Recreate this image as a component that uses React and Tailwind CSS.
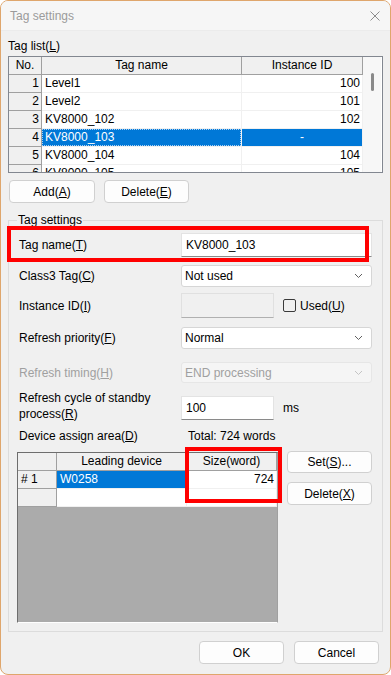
import React from 'react';

const tags = [
  { no: 1, name: 'Level1', id: '100' },
  { no: 2, name: 'Level2', id: '101' },
  { no: 3, name: 'KV8000_102', id: '102' },
  { no: 4, name: 'KV8000_103', id: '-', selected: true },
  { no: 5, name: 'KV8000_104', id: '104' },
  { no: 6, name: 'KV8000_105', id: '105' },
];

function Chevron({ color = '#606060' }) {
  return (
    <svg width="9" height="6" viewBox="0 0 9 6" className="shrink-0">
      <polyline points="1,1 4.5,4.5 8,1" fill="none" stroke={color} strokeWidth="1" />
    </svg>
  );
}

function Button({ children, className = '' }) {
  return (
    <div className={`flex items-center justify-center rounded-[4px] border border-[#d0d0d0] bg-[#fdfdfd] text-black ${className}`}>
      {children}
    </div>
  );
}

function Select({ value, disabled }) {
  return (
    <div
      className={`flex h-full w-[191px] items-center justify-between rounded-[3px] border pl-[3px] pr-[8px] ${
        disabled ? 'border-[#e6e6e6] bg-[#f5f5f5] text-[#a0a0a0]' : 'border-[#d6d6d6] bg-white text-black'
      }`}
    >
      <span>{value}</span>
      <Chevron color={disabled ? '#c4c4c4' : '#606060'} />
    </div>
  );
}

function Row({ label, children, className = '', labelClass = '' }) {
  return (
    <div className={`flex items-center pl-[10px] ${className}`}>
      <div className={`w-[162px] shrink-0 ${labelClass}`}>{label}</div>
      {children}
    </div>
  );
}

export default function App() {
  return (
    <div className="h-[675px] w-[391px] bg-white text-[12px] leading-[14px] text-black" style={{ fontFamily: '"Liberation Sans", Arial, sans-serif' }}>
      <div className="relative flex h-[675px] w-[391px] flex-col overflow-hidden rounded-[8px] border border-[#dfa66c] bg-[#f0f0f0]">
        {/* title bar */}
        <div className="flex h-[30px] shrink-0 items-center justify-between border-b border-[#ebebeb] bg-[#f6f6f6] pl-[9px] pr-[7px]">
          <span className="text-[12px] text-[#9b9b9b]">Tag settings</span>
          <svg width="12" height="12" viewBox="0 0 12 12" className="mr-[2px]">
            <path d="M1.5 1.5 L10.5 10.5 M10.5 1.5 L1.5 10.5" stroke="#8c8c8c" strokeWidth="1" />
          </svg>
        </div>

        <div className="flex flex-col px-[7px]">
          <div className="mt-[8px]">
            Tag list(<u>L</u>)
          </div>

          {/* tag list */}
          <div className="mt-[3px] flex h-[117px] border border-[#828790] bg-white">
            <div className="flex w-[354px] flex-col overflow-hidden">
              <div className="flex h-[18px] shrink-0 bg-[#f0f0f0] leading-[17px]">
                <div className="w-[33px] border-b border-r border-[#a0a0a0] text-center">No.</div>
                <div className="w-[200px] border-b border-r border-[#a0a0a0] text-center">Tag name</div>
                <div className="w-[121px] border-b border-r border-[#a0a0a0] text-center">Instance ID</div>
              </div>
              {tags.map((t) => (
                <div key={t.no} className="flex h-[18px] shrink-0 leading-[17px]">
                  <div className="w-[33px] border-b border-r border-[#a0a0a0] bg-[#f0f0f0] pr-[2px] text-right">{t.no}</div>
                  {t.selected ? (
                    <div className="w-[200px] border-b border-r border-[#f0f0f0] bg-[#0078d7]">
                      <div className="h-[17px] border border-dotted border-[#a8d0f5] pl-[2px] leading-[15px] text-white">{t.name}</div>
                    </div>
                  ) : (
                    <div className="w-[200px] border-b border-r border-[#f0f0f0] pl-[3px]">{t.name}</div>
                  )}
                  {t.selected ? (
                    <div className="w-[121px] border-b border-r border-[#f0f0f0] bg-[#0078d7] text-center text-white">{t.id}</div>
                  ) : (
                    <div className="w-[121px] border-b border-r border-[#f0f0f0] pr-[2px] text-right">{t.id}</div>
                  )}
                </div>
              ))}
            </div>
            <div className="flex w-[18px] flex-col items-center bg-[#f7f7f7] pt-[16px]">
              <div className="ml-[1px] h-[18px] w-[3px] rounded-full bg-[#8a8a8a]" />
            </div>
          </div>

          <div className="mt-[7px] flex gap-[9px] pl-[1px]">
            <Button className="h-[23px] w-[86px]">
              Add(<u>A</u>)
            </Button>
            <Button className="h-[23px] w-[85px]">
              Delete(<u>E</u>)
            </Button>
          </div>

          {/* tag settings group */}
          <fieldset className="mt-[10px] border border-[#dcdcdc] pb-[8px]">
            <legend className="ml-[8px] px-[1px] leading-[14px]">Tag settings</legend>

            <Row className="mt-[6px] h-[24px]" label={<>Tag name(<u>T</u>)</>}>
              <div className="flex h-full w-[191px] items-center border border-[#e3e3e3] border-b-[#8a8a8a] bg-white pl-[4px]">KV8000_103</div>
            </Row>

            <Row className="mt-[8px] h-[22px]" label={<>Class3 Tag(<u>C</u>)</>}>
              <Select value="Not used" />
            </Row>

            <Row className="mt-[6px] h-[25px]" label={<>Instance ID(<u>I</u>)</>}>
              <div className="h-full w-[93px] border border-[#e0e0e0] border-b-[#b0b0b0] bg-[#f0f0f0]" />
              <div className="ml-[9px] h-[13px] w-[13px] rounded-[2px] border border-[#3a3a3a]" />
              <span className="ml-[4px]">
                Used(<u>U</u>)
              </span>
            </Row>

            <Row className="mt-[9px] h-[22px]" label={<>Refresh priority(<u>F</u>)</>}>
              <Select value="Normal" />
            </Row>

            <Row className="mt-[13px] h-[21px]" labelClass="text-[#a0a0a0]" label={<>Refresh timing(<u>H</u>)</>}>
              <Select value="END processing" disabled />
            </Row>

            <Row
              className="mt-[13px] h-[24px]"
              labelClass="-mt-[4px] leading-[16px]"
              label={
                <>
                  Refresh cycle of standby
                  <br />
                  process(<u>R</u>)
                </>
              }
            >
              <div className="flex h-full w-[93px] items-center border border-[#e3e3e3] border-b-[#8a8a8a] bg-white pl-[4px]">100</div>
              <span className="ml-[9px]">ms</span>
            </Row>

            <Row className="mt-[9px] h-[14px]" label={<>Device assign area(<u>D</u>)</>}>
              <span className="ml-[7px]">Total: 724 words</span>
            </Row>

            {/* device assign grid */}
            <div className="mt-[9px] flex pl-[8px]">
              <div className="flex h-[171px] w-[261px] flex-col border border-[#6e6e6e] border-b-white border-r-[#a0a0a0] bg-[#ababab]">
                <div className="flex h-[18px] bg-[#f0f0f0] leading-[17px]">
                  <div className="w-[39px] border-b border-r border-[#a0a0a0]" />
                  <div className="w-[130px] border-b border-r border-[#a0a0a0] text-center">Leading device</div>
                  <div className="w-[90px] border-b border-r border-[#a0a0a0] text-center">Size(word)</div>
                </div>
                <div className="flex h-[18px] leading-[17px]">
                  <div className="w-[39px] border-b border-r border-[#a0a0a0] bg-[#f0f0f0] pl-[3px]"># 1</div>
                  <div className="w-[130px] border-b border-r border-[#f0f0f0] bg-[#0078d7] pl-[3px] text-white">W0258</div>
                  <div className="w-[90px] border-b border-r border-[#f0f0f0] bg-white pr-[2px] text-right">724</div>
                </div>
                <div className="flex h-[18px] leading-[17px]">
                  <div className="w-[39px] border-b border-r border-[#a0a0a0] bg-[#f0f0f0]" />
                  <div className="w-[130px] border-b border-r border-[#f0f0f0] bg-white" />
                  <div className="w-[90px] border-b border-r border-[#f0f0f0] bg-white" />
                </div>
              </div>
              <div className="ml-[9px] flex flex-col">
                <Button className="mt-[-1px] h-[22px] w-[85px]">
                  Set(<u>S</u>)...
                </Button>
                <Button className="mt-[9px] h-[23px] w-[85px]">
                  Delete(<u>X</u>)
                </Button>
              </div>
            </div>
          </fieldset>

          <div className="mt-[9px] flex justify-end gap-[10px] pr-[4px]">
            <Button className="h-[23px] w-[85px]">OK</Button>
            <Button className="h-[23px] w-[85px]">Cancel</Button>
          </div>
        </div>

        {/* annotation boxes */}
        <div className="pointer-events-none absolute left-[6px] top-[225px] h-[36px] w-[362px] border-[4px] border-[#ff0000]" />
        <div className="pointer-events-none absolute left-[184px] top-[446px] h-[56px] w-[97px] border-[4px] border-[#ff0000]" />
      </div>
    </div>
  );
}
